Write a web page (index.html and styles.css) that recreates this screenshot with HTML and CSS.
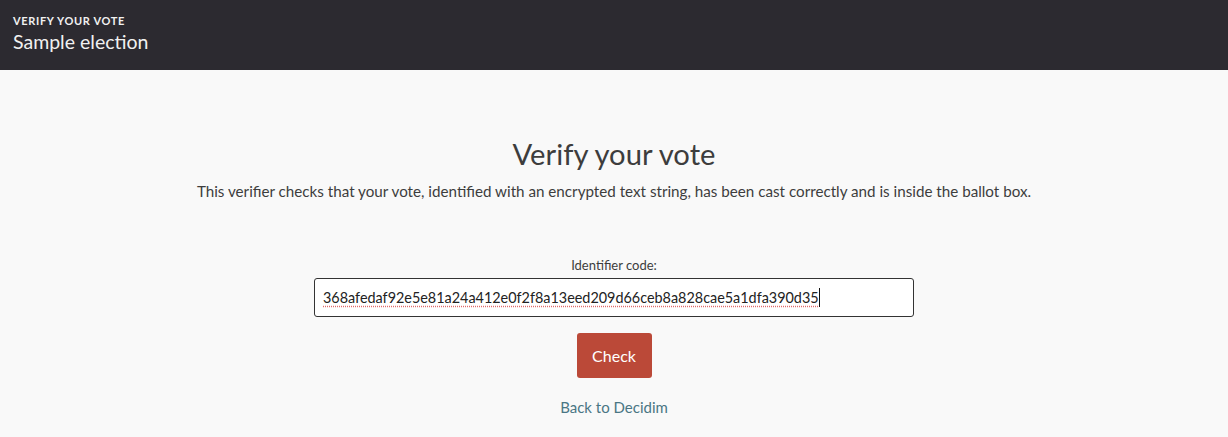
FILE: index.html
```html
<!DOCTYPE html>
<html lang="en">
<head>
<meta charset="utf-8">
<title>Verify your vote</title>
<link rel="stylesheet" href="styles.css">
</head>
<body>
<header class="topbar">
  <div class="eyebrow">VERIFY YOUR VOTE</div>
  <div class="title">Sample election</div>
</header>
<main class="content">
  <h1 class="heading">Verify your vote</h1>
  <p class="lead">This verifier checks that your vote, identified with an encrypted text string, has been cast correctly and is inside the ballot box.</p>
  <form class="form">
    <label class="label">Identifier code:</label>
    <div class="field"><span class="typed">368afedaf92e5e81a24a412e0f2f8a13eed209d66ceb8a828cae5a1dfa390d35</span><span class="caret"></span></div>
    <button type="button" class="btn">Check</button>
    <a class="back" href="#">Back to Decidim</a>
  </form>
</main>
</body>
</html>
```
FILE: styles.css
```css
html, body {
  margin: 0;
  padding: 0;
}
body {
  background: #f9f9f9;
  font-family: Lato, "Liberation Sans", sans-serif;
  color: #3d3d3d;
}
.topbar {
  background: #2c2a30;
  height: 70px;
  box-sizing: border-box;
  padding: 14px 13px 0;
  color: #f1f1f1;
}
.eyebrow {
  font-size: 11px;
  font-weight: 700;
  letter-spacing: 0.06em;
  line-height: 13px;
}
.title {
  font-size: 19.5px;
  line-height: 24px;
  margin-top: 3px;
}
.content {
  display: flex;
  flex-direction: column;
  align-items: center;
  padding-top: 65px;
}
.heading {
  margin: 0;
  font-size: 29.2px;
  font-weight: 400;
  line-height: 38px;
  color: #3d3d3d;
}
.lead {
  margin: 8px 0 0;
  font-size: 15.2px;
  line-height: 20px;
}
.form {
  display: flex;
  flex-direction: column;
  align-items: center;
  margin-top: 56px;
}
.label {
  font-size: 13px;
  line-height: 16px;
  margin-bottom: 5px;
}
.field {
  width: 600px;
  height: 39px;
  box-sizing: border-box;
  border: 1px solid #333;
  border-radius: 3px;
  background: #fff;
  padding: 0 8px;
  display: flex;
  align-items: center;
  font-size: 14.4px;
  color: #222;
}
.typed {
  text-decoration: underline dotted #e06b6b;
  text-underline-offset: 3px;
}
.caret {
  display: inline-block;
  width: 1px;
  height: 19px;
  background: #111;
}
.btn {
  margin-top: 16px;
  width: 75px;
  height: 45px;
  border: 0;
  border-radius: 3px;
  background: #bb4938;
  color: #fff;
  font-family: inherit;
  font-size: 16px;
}
.back {
  margin-top: 20px;
  font-size: 15px;
  color: #4a7684;
  text-decoration: none;
}
```
